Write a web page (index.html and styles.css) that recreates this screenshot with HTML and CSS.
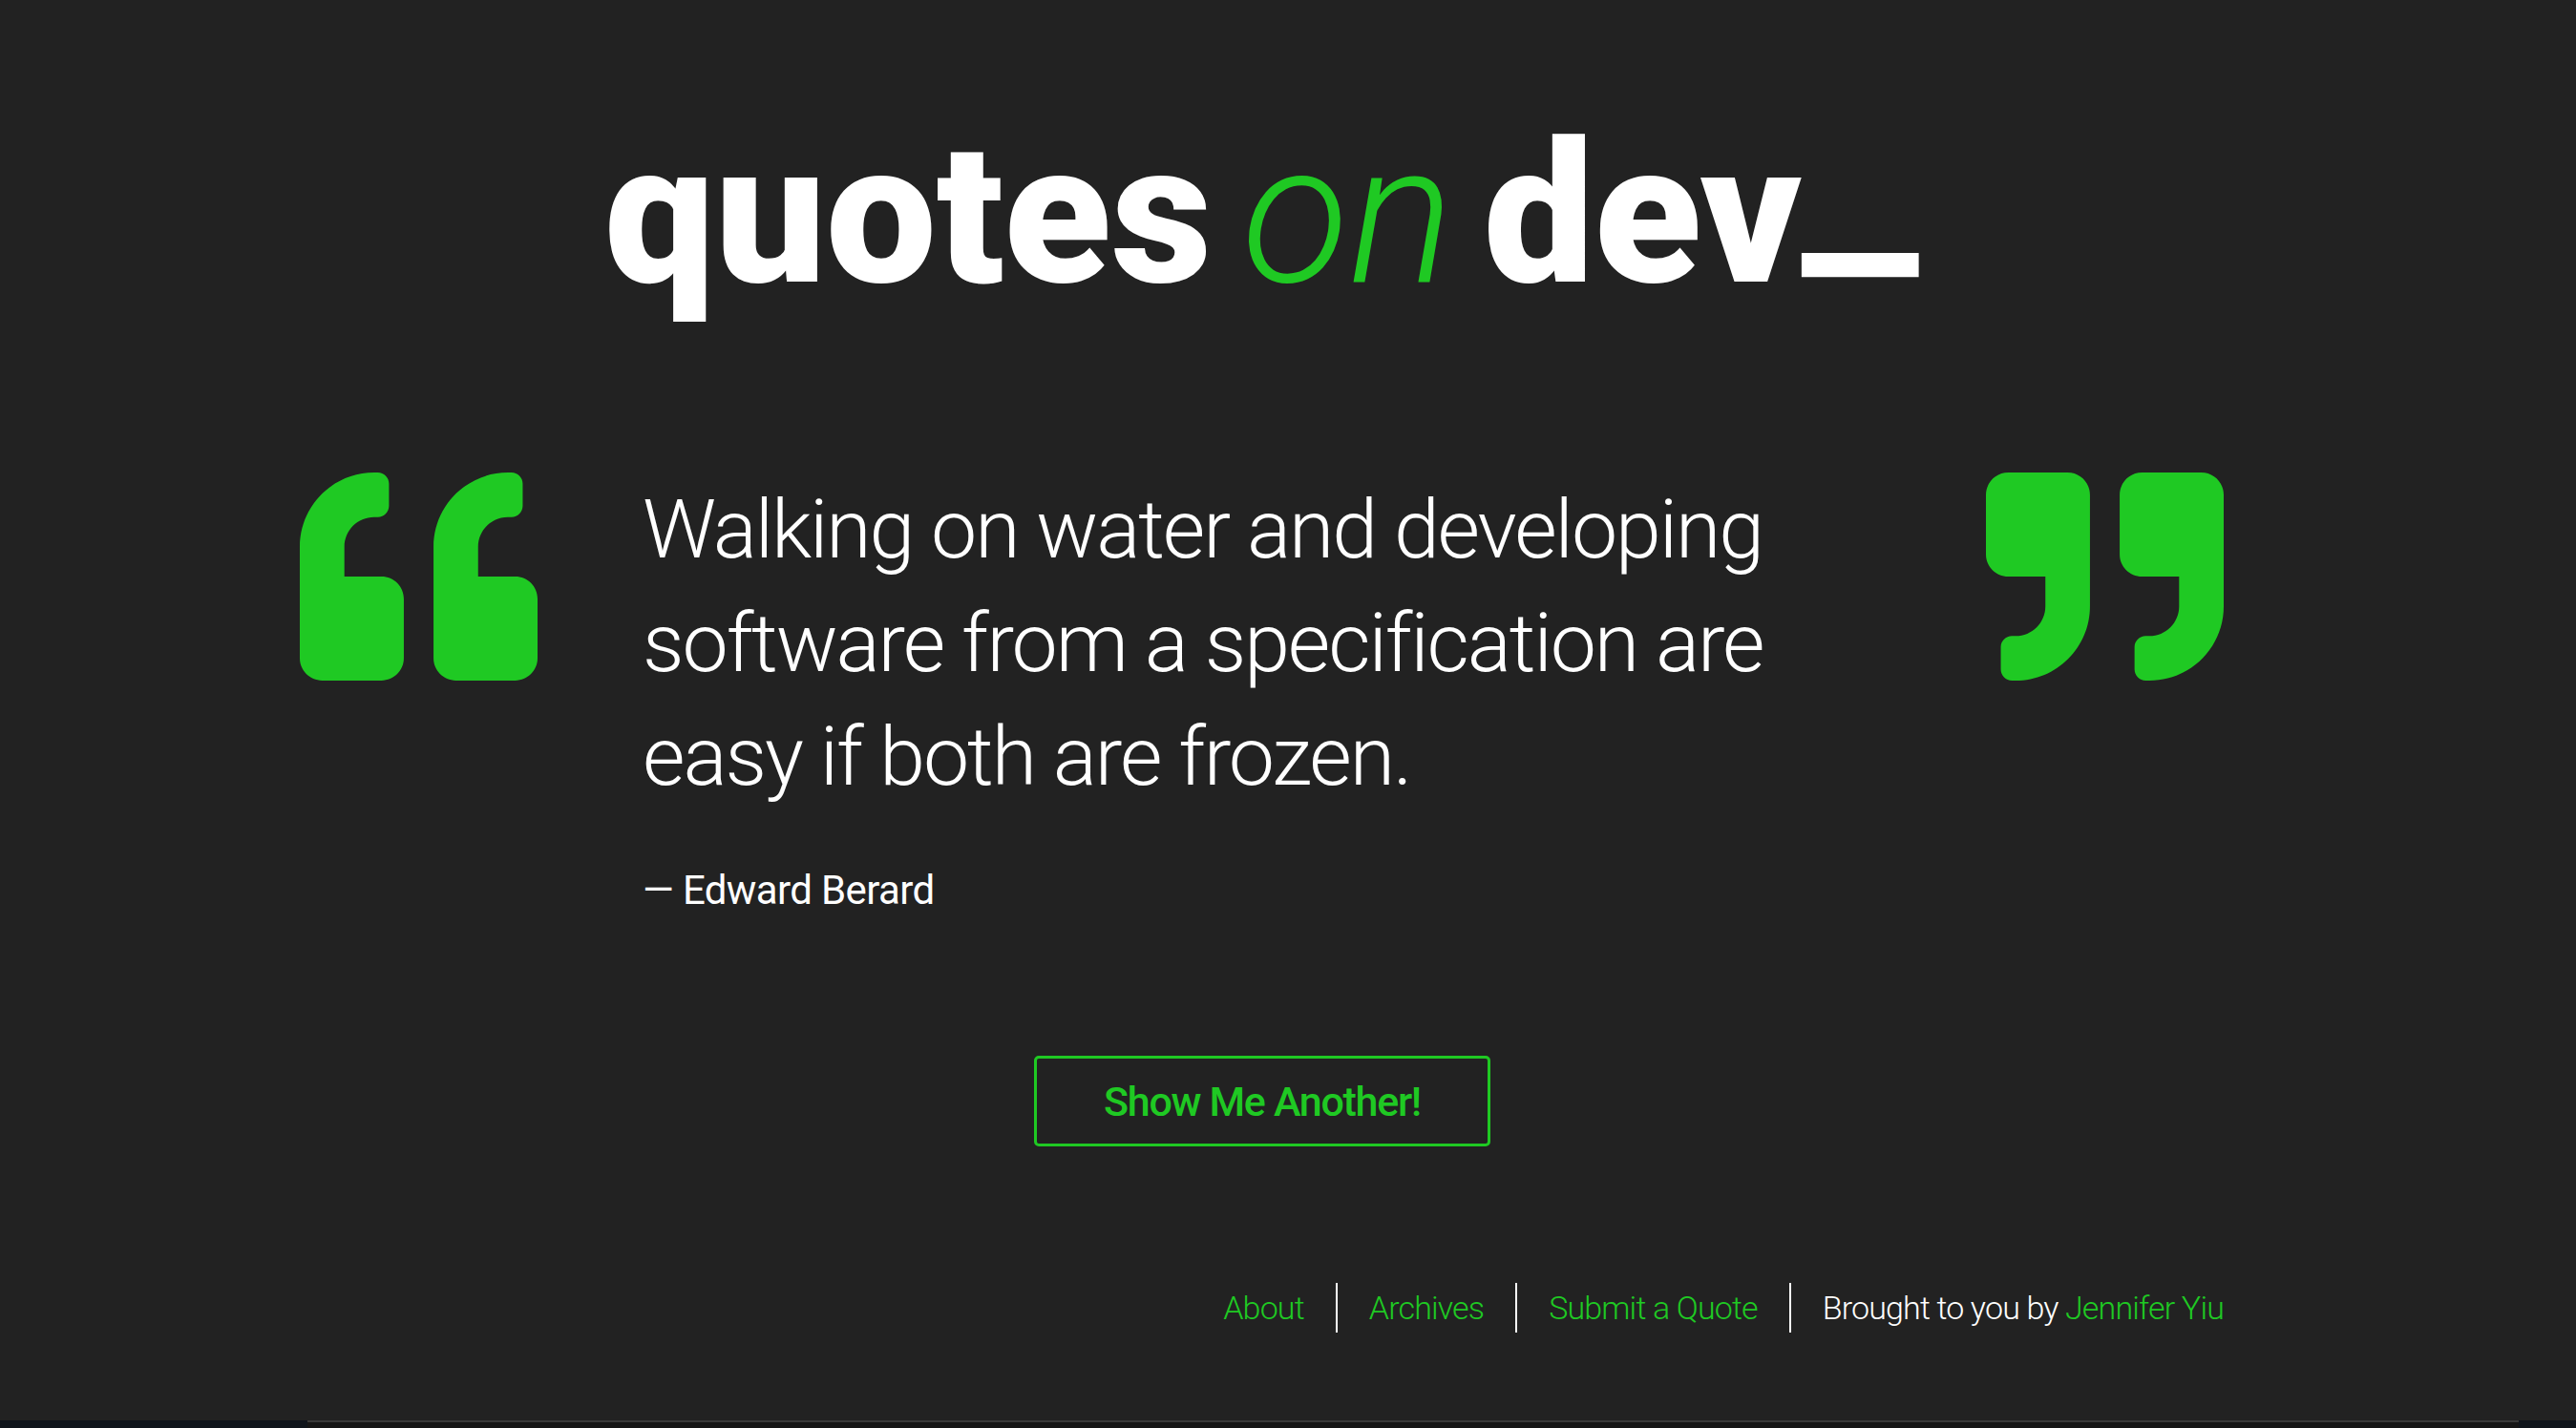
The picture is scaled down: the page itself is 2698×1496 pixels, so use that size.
FILE: index.html
```html
<!DOCTYPE html>
<html lang="en">
<head>
<meta charset="utf-8">
<title>Quotes on Dev</title>
<link rel="stylesheet" href="styles.css">
</head>
<body>
<div class="page">
  <main class="site">
    <header class="masthead">
      <h1 class="logo">quotes <em>on</em> dev<span class="cursor">_</span></h1>
    </header>

    <section class="quote-row">
      <svg class="mark" viewBox="0 32 512 448" aria-hidden="true">
        <path d="M464 256h-80v-64c0-35.3 28.7-64 64-64h8c13.3 0 24-10.7 24-24V56c0-13.3-10.7-24-24-24h-8c-88.4 0-160 71.6-160 160v240c0 26.5 21.5 48 48 48h128c26.5 0 48-21.5 48-48V304c0-26.5-21.5-48-48-48zm-288 0H96v-64c0-35.3 28.7-64 64-64h8c13.3 0 24-10.7 24-24V56c0-13.3-10.7-24-24-24h-8C71.6 32 0 103.6 0 192v240c0 26.5 21.5 48 48 48h128c26.5 0 48-21.5 48-48V304c0-26.5-21.5-48-48-48z"/>
      </svg>
      <blockquote class="quote">
        <p class="quote-text">Walking on water and developing software from a specification are easy if both are frozen.</p>
        <p class="author">— Edward Berard</p>
      </blockquote>
      <svg class="mark mark-close" viewBox="0 32 512 448" aria-hidden="true">
        <path d="M464 32H336c-26.5 0-48 21.5-48 48v128c0 26.5 21.5 48 48 48h80v64c0 35.3-28.7 64-64 64h-8c-13.3 0-24 10.7-24 24v48c0 13.3 10.7 24 24 24h8c88.4 0 160-71.6 160-160V80c0-26.5-21.5-48-48-48zm-288 0H48C21.5 32 0 53.5 0 80v128c0 26.5 21.5 48 48 48h80v64c0 35.3-28.7 64-64 64h-8c-13.3 0-24 10.7-24 24v48c0 13.3 10.7 24 24 24h8c88.4 0 160-71.6 160-160V80c0-26.5-21.5-48-48-48z"/>
      </svg>
    </section>

    <div class="actions">
      <button class="another" type="button">Show Me Another!</button>
    </div>

    <footer class="footer">
      <ul class="footer-nav">
        <li><a href="#">About</a></li>
        <li><a href="#">Archives</a></li>
        <li><a href="#">Submit a Quote</a></li>
        <li class="credit">Brought to you by <a href="#">Jennifer Yiu</a></li>
      </ul>
    </footer>
  </main>
</div>
<div class="dock"><div class="dock-bar"></div></div>
</body>
</html>
```

FILE: styles.css
```css
html, body {
  margin: 0;
  padding: 0;
}

body {
  background: #222222;
  color: #ffffff;
  font-family: Roboto, "Liberation Sans", sans-serif;
  overflow: hidden;
}

.page {
  height: 1488px;
  overflow: hidden;
}

.site {
  margin-left: 313px;
  width: 2018px;
  padding-top: 122px;
}

.logo {
  margin: 0;
  font-size: 206px;
  line-height: 206px;
  font-weight: 900;
  text-align: center;
  letter-spacing: 0;
  word-spacing: -20px;
  color: #ffffff;
  white-space: nowrap;
}

.logo em {
  font-style: italic;
  font-weight: 300;
  color: #1fc923;
}

.cursor {
  display: inline-block;
  transform: translateY(-30px) scaleX(1.35);
  transform-origin: left center;
  margin-right: 33px;
}

.quote-row {
  display: flex;
  align-items: flex-start;
  margin-top: 167px;
}

.mark {
  flex: none;
  width: 249px;
  height: 218px;
  fill: #1fc923;
  margin-left: 1px;
}

.mark-close {
  margin-left: 0;
  margin-right: 2px;
}

.quote {
  flex: 1;
  margin: 0 110px 0 110px;
  padding: 0;
}

.quote-text {
  margin: 0;
  font-size: 86px;
  line-height: 119px;
  font-weight: 300;
  letter-spacing: -0.024em;
  color: #ffffff;
}

.author {
  margin: 51px 0 0;
  font-size: 42px;
  line-height: 59px;
  font-weight: 400;
  letter-spacing: -0.015em;
  color: #ffffff;
}

.actions {
  display: flex;
  justify-content: center;
  margin-top: 144px;
}

.another {
  box-sizing: border-box;
  width: 478px;
  height: 95px;
  border: 3px solid #1fc923;
  border-radius: 5px;
  background: transparent;
  color: #1fc923;
  font-family: Roboto, "Liberation Sans", sans-serif;
  font-size: 43px;
  font-weight: 500;
  letter-spacing: -0.03em;
  padding: 0;
  cursor: pointer;
}

.footer {
  margin-top: 143px;
}

.footer-nav {
  display: flex;
  justify-content: flex-end;
  list-style: none;
  margin: 0;
  padding: 0;
}

.footer-nav li {
  padding: 0 33px;
  font-size: 34px;
  line-height: 52px;
  font-weight: 300;
  letter-spacing: -0.025em;
  color: #ffffff;
}

.footer-nav li + li {
  border-left: 2px solid #ffffff;
}

.footer-nav li:last-child {
  padding-right: 2px;
}

.footer-nav a {
  color: #1fc923;
  text-decoration: none;
}

.dock {
  display: flex;
  height: 8px;
  background: #10151c;
  padding: 0 60px 0 322px;
}

.dock-bar {
  flex: 1;
  border-top: 2px solid #3a3a3a;
  background: #161616;
}
```
